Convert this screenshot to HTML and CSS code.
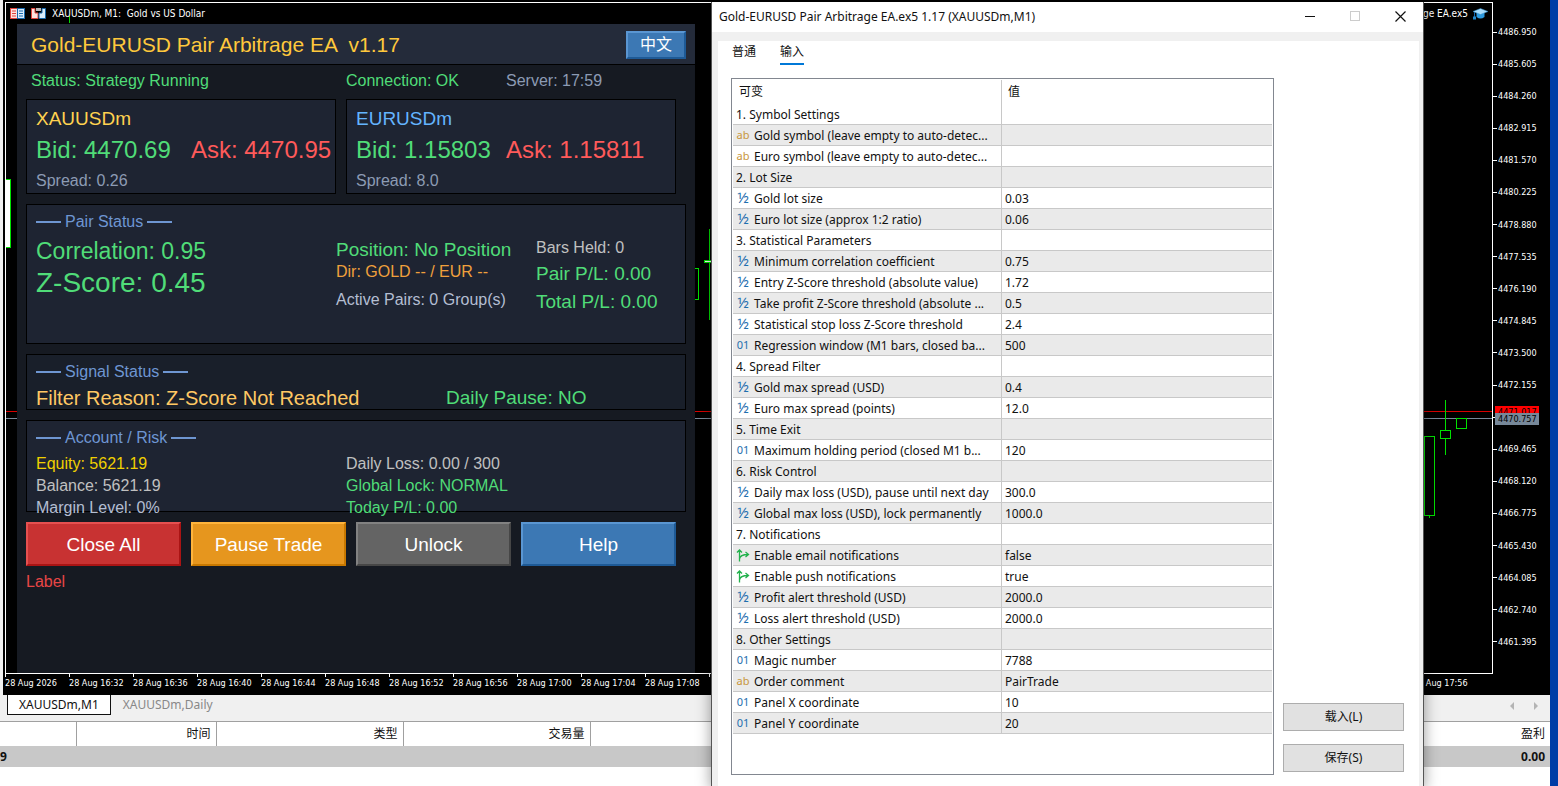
FILE: index.html
```html
<!DOCTYPE html>
<html lang="zh-CN">
<head>
    <meta charset="UTF-8">
    <title>XAUUSDm,M1</title>
    <meta name="viewport" content="width=device-width, initial-scale=1.0">
    <link rel="stylesheet" href="styles.css">
</head>
<body>
    <div class="terminal">
        <!-- 图表窗口 -->
        <main class="chart-window">
            <div class="chart-body">
                <div class="plot">
                    <svg class="candles">
                        <rect x="0" y="408" width="100%" height="1" fill="#d80000"/>
                        <rect x="0" y="415" width="100%" height="1" fill="#778899"/>
                        <rect x="-5" y="176.500" width="9.500" height="68" fill="#fff" stroke="#00e000"/>
                        <g fill="#00e000">
                            <rect x="63" y="13" width="1" height="7"/>
                            <rect x="703" y="226" width="1" height="91"/>
                            <rect x="698" y="257" width="8" height="3"/>
                            <rect x="1423" y="433" width="1" height="82"/>
                            <rect x="1439" y="397" width="1" height="55"/>
                        </g>
                        <rect x="699" y="258" width="7" height="1" fill="#fff"/>
                        <g fill="#000" stroke="#00e000">
                            <rect x="682.500" y="265.500" width="10" height="31"/>
                            <rect x="1418.500" y="433.500" width="10" height="79"/>
                            <rect x="1434.500" y="427.500" width="10" height="8"/>
                            <rect x="1450.500" y="415.500" width="10" height="10"/>
                        </g>
                    </svg>

                    <header class="plot-header">
                        <svg class="plot-icon" viewBox="0 0 15 11">
                            <rect x="0.500" y="0.500" width="7" height="10" fill="#fde3df" stroke="#e0443c"/>
                            <rect x="7.500" y="0.500" width="7" height="10" fill="#d8ecfb" stroke="#1769ad"/>
                            <path d="M2 3H6M2 5.500H6M2 8H6" stroke="#e0443c"/>
                            <path d="M9 3H13M9 5.500H13M9 8H13" stroke="#1769ad"/>
                        </svg>
                        <svg class="plot-icon" viewBox="0 0 15 11">
                            <path d="M0.500 0.500H4V5H7V10.500H0.500Z" fill="#fde3df" stroke="#e0443c"/>
                            <path d="M14.500 0.500H11V5H8V10.500H14.500Z" fill="#d8ecfb" stroke="#1769ad"/>
                            <rect x="5" y="0" width="5" height="3" fill="#b8b8b8"/>
                        </svg>
                        <span class="plot-title">XAUUSDm, M1:  Gold vs US Dollar</span>
                        <span class="expert-name">age EA.ex5</span>
                        <svg class="cap-icon" viewBox="0 0 15 12">
                            <path d="M3.500 5V9Q7.500 12 11.500 9V5Z" fill="#2d9ae0"/>
                            <path d="M0 3.500L7.500 0.500L15 3.500L7.500 6.500Z" fill="#a9dcfb" stroke="#2d8fd0" stroke-width="0.500"/>
                            <path d="M1.500 4V9" stroke="#1769ad"/>
                            <rect x="0" y="8.500" width="3" height="3" fill="#1f86cc"/>
                        </svg>
                    </header>

                    <!-- EA 面板 -->
                    <section class="panel">
                        <header class="panel-header">
                            <h1 class="panel-title">Gold-EURUSD Pair Arbitrage EA  v1.17</h1>
                            <button class="panel-button lang-button">中文</button>
                        </header>
                        <div class="status-row">
                            <span class="green">Status: Strategy Running</span>
                            <span class="green">Connection: OK</span>
                            <span class="slate">Server: 17:59</span>
                        </div>

                        <div class="panel-body">
                            <div class="quotes">
                                <div class="box quote quote-gold">
                                    <h2 class="symbol gold">XAUUSDm</h2>
                                    <div class="prices">
                                        <span class="green">Bid: 4470.69</span>
                                        <span class="red">Ask: 4470.95</span>
                                    </div>
                                    <div class="spread slate">Spread: 0.26</div>
                                </div>
                                <div class="box quote quote-euro">
                                    <h2 class="symbol sky">EURUSDm</h2>
                                    <div class="prices">
                                        <span class="green">Bid: 1.15803</span>
                                        <span class="red">Ask: 1.15811</span>
                                    </div>
                                    <div class="spread slate">Spread: 8.0</div>
                                </div>
                            </div>

                            <div class="box pair">
                                <h3 class="box-title">Pair Status</h3>
                                <div class="pair-grid">
                                    <div class="pair-left green">
                                        <div class="correlation">Correlation: 0.95</div>
                                        <div class="zscore">Z-Score: 0.45</div>
                                    </div>
                                    <div class="pair-middle">
                                        <div class="position green">Position: No Position</div>
                                        <div class="orange">Dir: GOLD -- / EUR --</div>
                                        <div class="active-pairs">Active Pairs: 0 Group(s)</div>
                                    </div>
                                    <div class="pair-right">
                                        <div class="silver">Bars Held: 0</div>
                                        <div class="profit green">Pair P/L: 0.00</div>
                                        <div class="profit green">Total P/L: 0.00</div>
                                    </div>
                                </div>
                            </div>

                            <div class="box signal">
                                <h3 class="box-title">Signal Status</h3>
                                <div class="signal-row">
                                    <span class="reason">Filter Reason: Z-Score Not Reached</span>
                                    <span class="pause green">Daily Pause: NO</span>
                                </div>
                            </div>

                            <div class="box account">
                                <h3 class="box-title">Account / Risk</h3>
                                <div class="account-grid">
                                    <span class="yellow">Equity: 5621.19</span>
                                    <span class="silver">Daily Loss: 0.00 / 300</span>
                                    <span class="silver">Balance: 5621.19</span>
                                    <span class="green">Global Lock: NORMAL</span>
                                    <span class="margin-level">Margin Level: 0%</span>
                                    <span class="green">Today P/L: 0.00</span>
                                </div>
                            </div>

                            <div class="panel-actions">
                                <button class="panel-button close-all">Close All</button>
                                <button class="panel-button pause-trade">Pause Trade</button>
                                <button class="panel-button unlock">Unlock</button>
                                <button class="panel-button help">Help</button>
                            </div>
                            <div class="panel-message">Label</div>
                        </div>
                    </section>
                </div>

                <!-- 价格轴 -->
                <div class="price-axis">
                    <ul class="price-list">
                        <li>4486.950</li>
                        <li>4485.605</li>
                        <li>4484.260</li>
                        <li>4482.915</li>
                        <li>4481.570</li>
                        <li>4480.225</li>
                        <li>4478.880</li>
                        <li>4477.535</li>
                        <li>4476.190</li>
                        <li>4474.845</li>
                        <li>4473.500</li>
                        <li>4472.155</li>
                        <li></li>
                        <li>4469.465</li>
                        <li>4468.120</li>
                        <li>4466.775</li>
                        <li>4465.430</li>
                        <li>4464.085</li>
                        <li>4462.740</li>
                        <li>4461.395</li>
                    </ul>
                    <span class="price-tag ask-tag">4471.017</span>
                    <span class="price-tag bid-tag">4470.757</span>
                </div>
            </div>

            <!-- 时间轴 -->
            <div class="time-axis">
                <span>28 Aug 2026</span>
                <span>28 Aug 16:32</span>
                <span>28 Aug 16:36</span>
                <span>28 Aug 16:40</span>
                <span>28 Aug 16:44</span>
                <span>28 Aug 16:48</span>
                <span>28 Aug 16:52</span>
                <span>28 Aug 16:56</span>
                <span>28 Aug 17:00</span>
                <span>28 Aug 17:04</span>
                <span>28 Aug 17:08</span>
                <span></span>
                <span></span>
                <span></span>
                <span></span>
                <span></span>
                <span></span>
                <span></span>
                <span></span>
                <span></span>
                <span></span>
                <span></span>
                <span>28 Aug 17:56</span>
            </div>
        </main>

        <nav class="chart-tabs">
            <a href="#" class="chart-tab active">XAUUSDm,M1</a>
            <a href="#" class="chart-tab">XAUUSDm,Daily</a>
            <svg class="tab-arrows" viewBox="0 0 28 8">
                <path d="M4 0V8L0 4Z M24 0V8L28 4Z" fill="#b4b4b4"/>
            </svg>
        </nav>

        <table class="trades">
            <thead>
                <tr>
                    <th class="col-order"></th>
                    <th class="col-time">时间</th>
                    <th class="col-type">类型</th>
                    <th class="col-type">交易量</th>
                    <th>盈利</th>
                </tr>
            </thead>
            <tbody>
                <tr>
                    <td class="balance">9</td>
                    <td></td>
                    <td></td>
                    <td></td>
                    <td>0.00</td>
                </tr>
            </tbody>
        </table>
    </div>

    <!-- EA 参数对话框 -->
    <div class="dialog" role="dialog" aria-labelledby="dialog-title">
        <header class="dialog-header">
            <h2 class="dialog-title" id="dialog-title">Gold-EURUSD Pair Arbitrage EA.ex5 1.17 (XAUUSDm,M1)</h2>
            <button class="window-button" aria-label="最小化">
                <svg viewBox="0 0 11 11"><path d="M0 5.500H10" stroke="#111"/></svg>
            </button>
            <button class="window-button" aria-label="最大化" disabled>
                <svg viewBox="0 0 11 11"><rect x="0.500" y="0.500" width="9" height="9" fill="none" stroke="#ccc"/></svg>
            </button>
            <button class="window-button" aria-label="关闭">
                <svg viewBox="0 0 11 11"><path d="M0.500 0.500L10.500 10.500M10.500 0.500L0.500 10.500" stroke="#111" stroke-width="1.200"/></svg>
            </button>
        </header>
        <div class="dialog-page">
            <nav class="dialog-tabs">
                <a href="#" class="dialog-tab">普通</a>
                <a href="#" class="dialog-tab active">输入</a>
            </nav>
            <div class="dialog-content">
                <div class="inputs-box">
                    <table class="inputs">
                        <thead>
                            <tr><th class="col-name">可变</th><th>值</th></tr>
                        </thead>
                        <tbody>
                            <tr><td>1. Symbol Settings</td><td></td></tr>
                            <tr><td><i class="type str">ab</i>Gold symbol (leave empty to auto-detec...</td><td></td></tr>
                            <tr><td><i class="type str">ab</i>Euro symbol (leave empty to auto-detec...</td><td></td></tr>
                            <tr><td>2. Lot Size</td><td></td></tr>
                            <tr><td><i class="type num">½</i>Gold lot size</td><td>0.03</td></tr>
                            <tr><td><i class="type num">½</i>Euro lot size (approx 1:2 ratio)</td><td>0.06</td></tr>
                            <tr><td>3. Statistical Parameters</td><td></td></tr>
                            <tr><td><i class="type num">½</i>Minimum correlation coefficient</td><td>0.75</td></tr>
                            <tr><td><i class="type num">½</i>Entry Z-Score threshold (absolute value)</td><td>1.72</td></tr>
                            <tr><td><i class="type num">½</i>Take profit Z-Score threshold (absolute ...</td><td>0.5</td></tr>
                            <tr><td><i class="type num">½</i>Statistical stop loss Z-Score threshold</td><td>2.4</td></tr>
                            <tr><td><i class="type int">01</i>Regression window (M1 bars, closed ba...</td><td>500</td></tr>
                            <tr><td>4. Spread Filter</td><td></td></tr>
                            <tr><td><i class="type num">½</i>Gold max spread (USD)</td><td>0.4</td></tr>
                            <tr><td><i class="type num">½</i>Euro max spread (points)</td><td>12.0</td></tr>
                            <tr><td>5. Time Exit</td><td></td></tr>
                            <tr><td><i class="type int">01</i>Maximum holding period (closed M1 b...</td><td>120</td></tr>
                            <tr><td>6. Risk Control</td><td></td></tr>
                            <tr><td><i class="type num">½</i>Daily max loss (USD), pause until next day</td><td>300.0</td></tr>
                            <tr><td><i class="type num">½</i>Global max loss (USD), lock permanently</td><td>1000.0</td></tr>
                            <tr><td>7. Notifications</td><td></td></tr>
                            <tr><td><svg class="type" viewBox="0 0 14 13"><path d="M3.500 12.500V1M1 3.500L3.500 1L6 3.500M3.500 10Q4 5.500 12 5.500M9.500 3L12.500 5.500L9.500 8" fill="none" stroke="#22b14c" stroke-width="1.300"/></svg>Enable email notifications</td><td>false</td></tr>
                            <tr><td><svg class="type" viewBox="0 0 14 13"><path d="M3.500 12.500V1M1 3.500L3.500 1L6 3.500M3.500 10Q4 5.500 12 5.500M9.500 3L12.500 5.500L9.500 8" fill="none" stroke="#22b14c" stroke-width="1.300"/></svg>Enable push notifications</td><td>true</td></tr>
                            <tr><td><i class="type num">½</i>Profit alert threshold (USD)</td><td>2000.0</td></tr>
                            <tr><td><i class="type num">½</i>Loss alert threshold (USD)</td><td>2000.0</td></tr>
                            <tr><td>8. Other Settings</td><td></td></tr>
                            <tr><td><i class="type int">01</i>Magic number</td><td>7788</td></tr>
                            <tr><td><i class="type str">ab</i>Order comment</td><td>PairTrade</td></tr>
                            <tr><td><i class="type int">01</i>Panel X coordinate</td><td>10</td></tr>
                            <tr><td><i class="type int">01</i>Panel Y coordinate</td><td>20</td></tr>
                        </tbody>
                    </table>
                </div>
                <div class="dialog-actions">
                    <button class="dialog-button">载入(L)</button>
                    <button class="dialog-button">保存(S)</button>
                </div>
            </div>
        </div>
    </div>
</body>
</html>
```
FILE: styles.css
```css
* {
    box-sizing: border-box;
}

body {
    margin: 0;
    height: 100vh;
    overflow: hidden;
    position: relative;
    background-color: #003da6;
    font-family: "Noto Sans", "Noto Sans CJK SC", sans-serif;
    font-size: 12px;
    color: #111;
}

h1, h2, h3, ul {
    margin: 0;
    padding: 0;
    font-weight: normal;
}

a {
    color: inherit;
    text-decoration: none;
}

button {
    font-family: inherit;
    cursor: pointer;
}

.terminal {
    height: 100%;
    margin-right: 8px;
    background-color: white;
    display: flex;
    flex-direction: column;
}

/* 图表 */
.chart-window {
    height: 695px;
    border-left: 3px solid #f0f0f0;
    padding: 2px 0 0 2px;
    background-color: black;
    color: white;
    font-family: "DejaVu Sans Condensed", "Noto Sans", sans-serif;
    display: flex;
    flex-direction: column;
}

.chart-body {
    flex: 1;
    display: flex;
}

.plot {
    flex: 1;
    position: relative;
    border: 1px solid white;
    overflow: hidden;
    display: flex;
    flex-direction: column;
}

.candles {
    position: absolute;
    left: 0;
    top: 0;
    width: 100%;
    height: 100%;
}

.plot-header {
    position: relative;
    height: 21px;
    padding: 0 4px;
    display: flex;
    align-items: center;
    gap: 5px;
    font-size: 10px;
    white-space: pre;
}

.plot-icon {
    width: 15px;
    height: 11px;
    margin-right: 1px;
}

.expert-name {
    margin-left: auto;
}

.cap-icon {
    width: 15px;
    height: 12px;
}

/* 价格轴和时间轴 */
.price-axis {
    position: relative;
    width: 57px;
    font-size: 9px;
    line-height: 12px;
}

.price-list {
    list-style: none;
    height: 646px;
    padding-top: 24px;
    display: flex;
    flex-direction: column;
    justify-content: space-between;
}

.price-list li {
    height: 12px;
    display: flex;
    align-items: center;
    gap: 1px;
}

.price-list li::before {
    content: "";
    width: 4px;
    height: 1px;
    background-color: white;
}

.price-tag {
    position: absolute;
    left: 2px;
    width: 44px;
    height: 12px;
    padding-left: 3px;
    color: black;
}

.ask-tag {
    top: 404px;
    background-color: red;
}

.bid-tag {
    top: 411px;
    background-color: #778899;
}

.time-axis {
    height: 21px;
    display: flex;
    overflow: hidden;
    font-size: 9px;
    line-height: 12px;
}

.time-axis span {
    flex: 0 0 64px;
    white-space: nowrap;
}

.time-axis span::before {
    content: "";
    display: block;
    width: 1px;
    height: 3px;
    background-color: white;
}

/* EA 面板 */
.panel {
    position: relative;
    flex: 1;
    width: 678px;
    margin-left: 11px;
    background-color: #161a22;
    font-family: "Liberation Sans", "Noto Sans CJK SC", sans-serif;
    font-size: 16px;
    line-height: 20px;
    white-space: nowrap;
}

.panel-header {
    height: 41px;
    padding: 2px 9px 0 14px;
    border-bottom: 1px solid black;
    background-color: #242b3a;
    display: flex;
    align-items: center;
    justify-content: space-between;
}

.panel-title {
    color: #ffc83c;
    font-size: 21px;
    white-space: pre;
}

.panel-button {
    height: 44px;
    padding: 2px 0 0;
    border: 2px solid;
    color: white;
    font-size: 19px;
}

.lang-button {
    width: 60px;
    height: 28px;
    padding: 0;
    font-size: 16px;
    line-height: 20px;
}

.lang-button,
.help {
    background-color: #3c78b4;
    border-color: #5a96d2 #1e5a96 #1e5a96 #5a96d2;
}

.close-all {
    background-color: #c83232;
    border-color: #e65050 #aa1414 #aa1414 #e65050;
}

.pause-trade {
    background-color: #e6961e;
    border-color: #ffb43c #c87800 #c87800 #ffb43c;
}

.unlock {
    background-color: #646464;
    border-color: #828282 #464646 #464646 #828282;
}

.status-row {
    height: 34px;
    padding: 6px 14px 0;
    display: grid;
    grid-template-columns: 315px 160px 1fr;
}

.panel-body {
    padding: 0 9px;
    display: flex;
    flex-direction: column;
    gap: 10px;
}

.box {
    border: 1px solid black;
    padding: 7px 9px 0;
    background-color: #1e2432;
}

.quotes {
    display: flex;
    gap: 10px;
}

.quote {
    height: 95px;
    padding-top: 6px;
}

.quote-gold {
    width: 310px;
}

.quote-euro {
    width: 330px;
}

.symbol {
    font-size: 19px;
    line-height: 26px;
}

.prices {
    display: grid;
    grid-template-columns: 155px 1fr;
    font-size: 24px;
    line-height: 36px;
}

.quote-euro .prices {
    grid-template-columns: 150px 1fr;
}

.spread {
    line-height: 26px;
}

.box-title {
    color: #6e96d2;
    font-size: 16px;
    display: flex;
    align-items: center;
    gap: 4px;
}

.box-title::before,
.box-title::after {
    content: "";
    width: 25px;
    height: 2px;
    background-color: #6e96d2;
}

.pair {
    height: 140px;
}

.pair-grid {
    margin-top: 3px;
    display: grid;
    grid-template-columns: 300px 200px 1fr;
}

.correlation {
    font-size: 23px;
    line-height: 32px;
}

.zscore {
    font-size: 28px;
    line-height: 32px;
}

.pair-middle {
    padding-top: 3px;
}

.position {
    font-size: 19px;
    line-height: 24px;
}

.active-pairs {
    margin-top: 8px;
    color: #b4bed2;
}

.pair-right {
    padding-top: 3px;
    display: flex;
    flex-direction: column;
    gap: 4px;
}

.profit {
    font-size: 19px;
    line-height: 24px;
}

.signal {
    height: 56px;
    background-color: #191f2a;
}

.signal-row {
    margin-top: 4px;
    display: grid;
    grid-template-columns: 410px 1fr;
    line-height: 24px;
}

.reason {
    color: #ffc864;
    font-size: 20px;
}

.pause {
    font-size: 19px;
}

.account {
    height: 92px;
}

.account-grid {
    margin-top: 5px;
    display: grid;
    grid-template-columns: 310px 1fr;
    line-height: 22px;
}

.panel-actions {
    display: grid;
    grid-template-columns: repeat(4, 155px);
    gap: 10px;
}

.panel-message {
    margin-top: -4px;
    color: #e64646;
}

.green {
    color: #50dc78;
}

.red {
    color: #ff5a5a;
}

.gold {
    color: #ffd250;
}

.sky {
    color: #64b4ff;
}

.slate {
    color: #8c9bb4;
}

.silver {
    color: #c0c0c0;
}

.margin-level {
    color: #b4bed2;
}

.yellow {
    color: #f0d000;
}

.orange {
    color: #f0a03c;
}

/* 图表标签 */
.chart-tabs {
    height: 27px;
    padding: 0 12px 0 7px;
    border-bottom: 1px solid #a0a0a0;
    background-color: #f0f0f0;
    display: flex;
    align-items: flex-start;
}

.chart-tab {
    height: 20px;
    padding: 0 11px;
    border: solid transparent;
    border-width: 0 1px 1px;
    color: #888;
    line-height: 20px;
}

.chart-tab.active {
    border-color: #111;
    background-color: white;
    color: #111;
}

.tab-arrows {
    width: 28px;
    height: 8px;
    margin: 7px 0 0 auto;
}

/* 交易列表 */
.trades {
    width: 100%;
    table-layout: fixed;
    border-collapse: collapse;
    text-align: right;
}

.trades th,
.trades td {
    padding: 0 5px;
    line-height: 20px;
}

.trades th {
    height: 24px;
    border-right: 1px solid #a0a0a0;
    font-weight: normal;
}

.trades th:last-child {
    border-right: none;
}

.trades td {
    height: 21px;
    background-color: #c8c8c8;
    font-weight: bold;
}

.trades .balance {
    padding: 0;
    text-align: left;
}

.col-order {
    width: 76px;
}

.col-time {
    width: 140px;
}

.col-type {
    width: 187px;
}

/* 对话框 */
.dialog {
    position: absolute;
    left: 711px;
    top: 2px;
    bottom: 0;
    width: 713px;
    border: solid #555;
    border-width: 0 1px;
    background-color: #f0f0f0;
    box-shadow: 0 4px 14px rgba(0, 0, 0, 0.4);
    display: flex;
    flex-direction: column;
}

.dialog-header {
    height: 30px;
    padding: 0 0 2px 7px;
    background-color: white;
    display: flex;
    align-items: center;
}

.dialog-title {
    flex: 1;
    font-size: 12px;
}

.window-button {
    width: 45px;
    height: 28px;
    padding: 0;
    border: none;
    background: none;
    display: flex;
    align-items: center;
    justify-content: center;
}

.window-button svg {
    width: 11px;
    height: 11px;
}

.dialog-page {
    flex: 1;
    margin: 9px 4px 0 6px;
    padding: 0 15px 11px 13px;
    background-color: white;
    display: flex;
    flex-direction: column;
}

.dialog-tabs {
    height: 37px;
    padding-left: 1px;
    display: flex;
    align-items: flex-start;
    gap: 24px;
}

.dialog-tab {
    height: 24px;
    line-height: 22px;
}

.dialog-tab.active {
    border-bottom: 2px solid #0078d7;
}

.dialog-content {
    flex: 1;
    display: flex;
    gap: 9px;
}

.inputs-box {
    flex: 1;
    padding: 1px;
    border: 1px solid #828790;
}

.inputs {
    width: 100%;
    table-layout: fixed;
    border-collapse: separate;
    border-spacing: 0;
    text-align: left;
    white-space: nowrap;
}

.inputs th {
    height: 24px;
    padding: 0 6px 2px;
    font-weight: normal;
}

.inputs td {
    height: 21px;
    padding: 2px 3px 0;
    border-bottom: 1px solid #c8c8c8;
    line-height: 18px;
}

.inputs tr > :first-child {
    border-right: 1px solid #c8c8c8;
}

.inputs tbody tr:nth-child(even) {
    background-color: #eaeaea;
}

.col-name {
    width: 269px;
}

.type {
    display: inline-block;
    width: 14px;
    height: 13px;
    margin: 0 4px 2px 0;
    font-style: normal;
    text-align: center;
    line-height: 11px;
    vertical-align: middle;
}

.str {
    color: #c8963c;
    font-size: 11px;
}

.num {
    color: #1f6fae;
    font-size: 15px;
}

.int {
    color: #1f6fae;
    font-size: 11px;
}

.dialog-actions {
    width: 121px;
    padding-bottom: 3px;
    display: flex;
    flex-direction: column;
    justify-content: flex-end;
    gap: 13px;
}

.dialog-button {
    height: 28px;
    padding: 0 0 2px;
    border: 1px solid #adadad;
    background-color: #e1e1e1;
    color: #111;
    font-size: 12px;
}
```
